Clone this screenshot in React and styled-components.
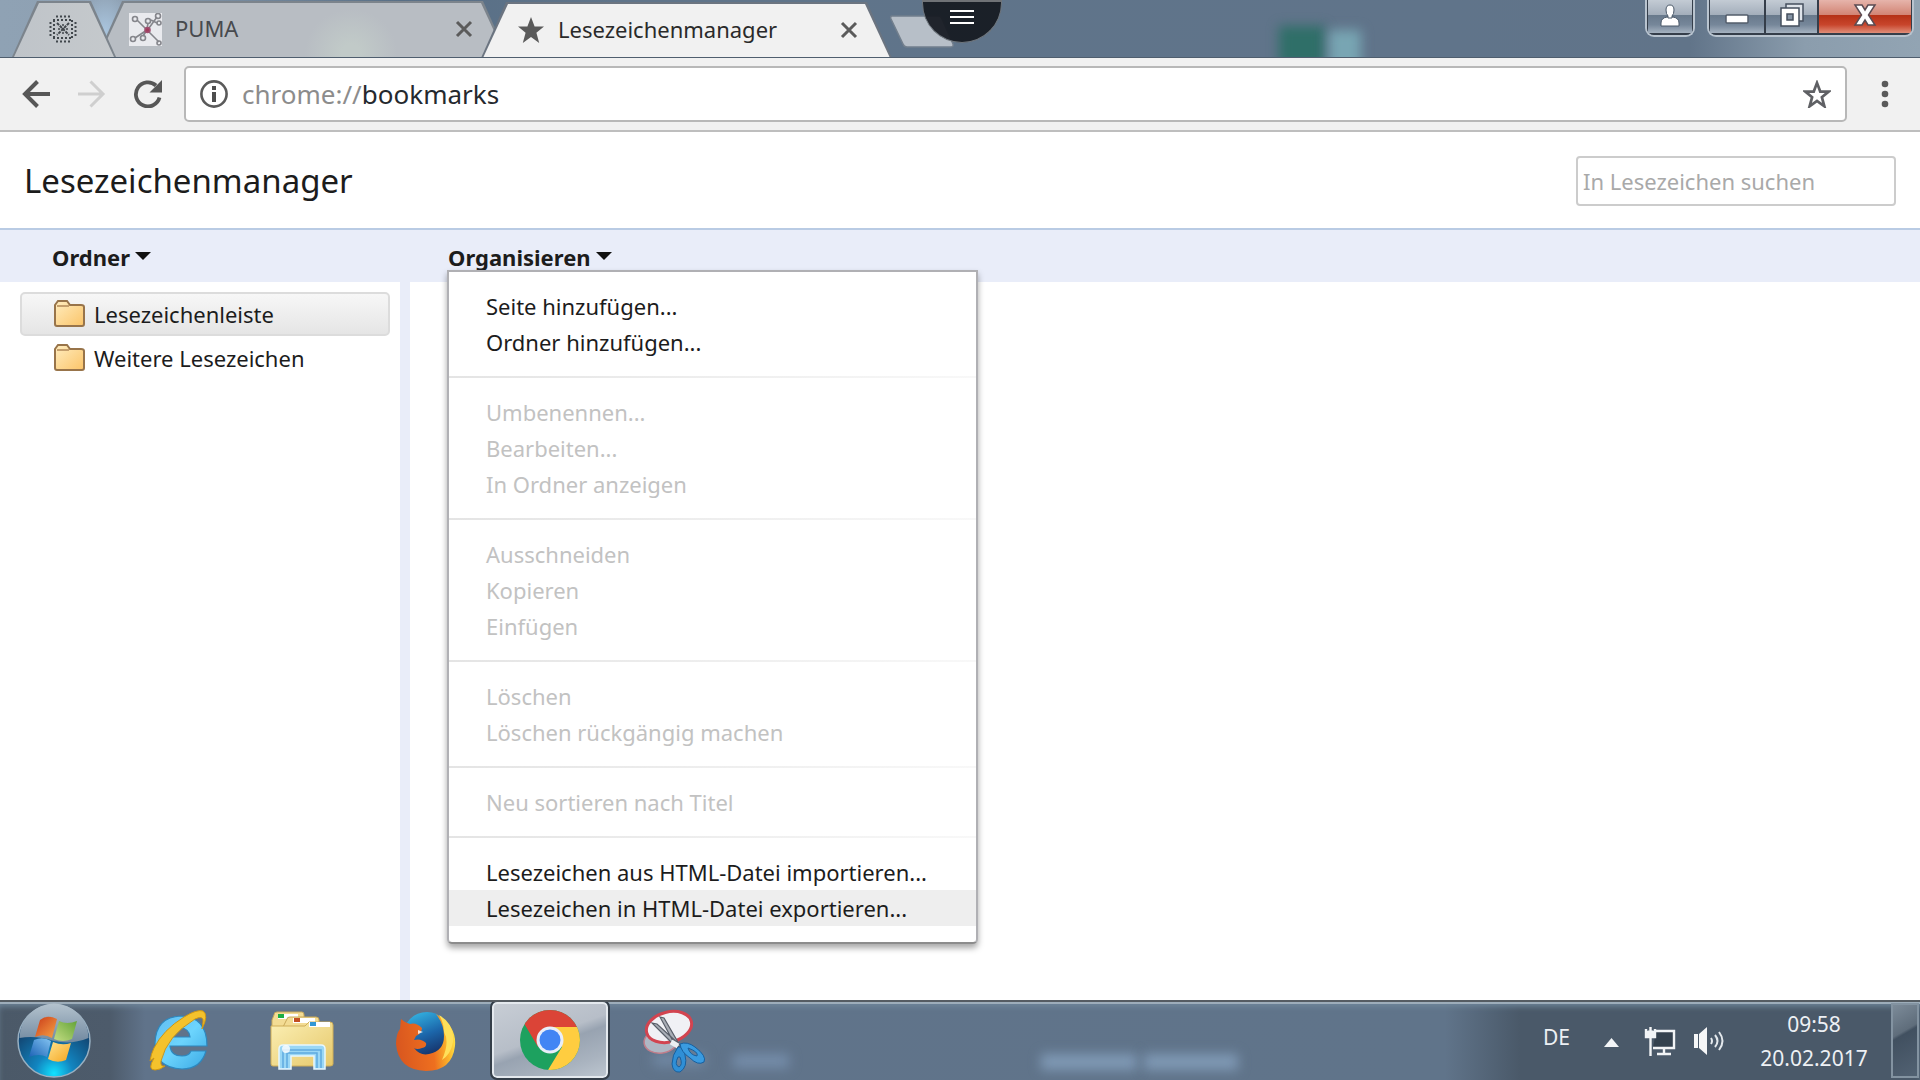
import React from "react";
import styled, { createGlobalStyle, css } from "styled-components";

const GlobalStyle = createGlobalStyle`
  *, *::before, *::after { box-sizing: border-box; }
  body {
    margin: 0;
    background: #fff;
    color: #1c1c1c;
    font-family: "Noto Sans", "Open Sans", sans-serif;
    font-size: 22px;
    line-height: 36px;
  }
  button, input {
    font: inherit;
    color: inherit;
    margin: 0;
    padding: 0;
    border: 0;
    background: none;
  }
  svg { display: block; flex: none; }
`;

const Desktop = styled.div`
  display: flex;
  flex-direction: column;
  min-height: 100vh;
`;

/* ---------- window frame ---------- */

const Frame = styled.header`
  position: relative;
  display: flex;
  align-items: flex-end;
  height: 58px;
  padding-left: 12px;
  overflow: hidden;
  border-bottom: 1px solid #4f5e6e;
  background:
    radial-gradient(ellipse 30px 40px at 105px 30px, #a9c4dd, rgba(169, 196, 221, 0)),
    linear-gradient(90deg, #8fa2b4 0, #8ea0b2 110px, #586f86 400px, #5f748a 620px, #60748a 76%, #617489 88%, #8b9dad 94%, #92a4b3 100%);
`;

const Smudge = styled.span`
  position: absolute;
  left: ${(p) => p.$x};
  top: ${(p) => p.$y};
  width: ${(p) => p.$w};
  height: ${(p) => p.$h};
  background: ${(p) => p.$color};
  filter: blur(6px);
  pointer-events: none;
`;

const tabShape = "polygon(0 100%, 25px 0, calc(100% - 25px) 0, 100% 100%)";

const tabPadding = (p) => {
  if (p.$pinned) return "0 34px 0 32px";
  return p.$active ? "0 29px 0 36px" : "0 30px 0 32px";
};

const Tab = styled.div`
  position: relative;
  z-index: ${(p) => p.$z};
  display: flex;
  align-items: center;
  width: ${(p) => p.$width};
  height: 56px;
  margin-right: ${(p) => p.$overlap};
  margin-bottom: ${(p) => (p.$active ? "-1px" : "0")};
  padding: ${tabPadding};
  justify-content: ${(p) => (p.$pinned ? "center" : "flex-start")};
  color: ${(p) => (p.$active ? "#2a2a2a" : "#474a4e")};
  &::before, &::after {
    content: "";
    position: absolute;
    inset: 0;
    z-index: -1;
    clip-path: ${tabShape};
    background: ${(p) => (p.$active ? "#6b7480" : "#7c848c")};
  }
  &::after {
    inset: 2px 2px 0;
    background: ${(p) => p.$fill};
  }
`;

const TabTitle = styled.span`
  flex: 1;
  margin-left: 13px;
  padding-bottom: 2px;
  line-height: 32px;
  white-space: nowrap;
`;

const IconButton = styled.button`
  display: flex;
  align-items: center;
  justify-content: center;
  width: ${(p) => p.$w || "28px"};
  height: ${(p) => p.$h || "28px"};
  flex: none;
`;

const NewTab = styled.button`
  align-self: flex-start;
  width: 66px;
  height: 33px;
  margin-top: 15px;
`;

const PullHandle = styled.button`
  position: absolute;
  left: 50%;
  top: 0;
  z-index: 6;
  display: flex;
  flex-direction: column;
  align-items: center;
  gap: 4px;
  width: 80px;
  height: 43px;
  padding-top: 8px;
  border: 1px solid #6f767d;
  border-top: 2px solid #6f7276;
  border-radius: 0 0 40px 40px;
  background: rgba(22, 27, 34, 0.94);
  transform: translateX(-38px);
  & > i {
    width: 24px;
    height: 2px;
    background: #fff;
  }
`;

const WindowButtons = styled.div`
  display: flex;
  align-self: flex-start;
  gap: 12px;
  margin-left: auto;
  margin-right: 6px;
`;

const ButtonGroup = styled.div`
  display: flex;
  height: 37px;
  overflow: hidden;
  border: 2px solid #b9c4cf;
  border-top: 0;
  border-radius: 0 0 9px 9px;
`;

const WindowButton = styled.button`
  display: flex;
  align-items: center;
  justify-content: center;
  width: ${(p) => p.$w};
  height: 35px;
  padding-bottom: 4px;
  border: solid #353e4a;
  border-width: 0 1px 2px;
  background: ${(p) =>
    p.$danger
      ? "linear-gradient(#e6b4ab 0, #d28474 45%, #b53116 46%, #c8452c 75%, #e08e79 100%)"
      : "linear-gradient(#c3cbd4 0, #a3aebb 45%, #68798b 46%, #76879a 75%, #a5b2c0 100%)"};
`;

/* ---------- browser toolbar ---------- */

const Toolbar = styled.div`
  display: flex;
  align-items: center;
  height: 74px;
  padding: 0 25px 0 22px;
  gap: 28px;
  border-bottom: 2px solid #bebebe;
  background: #f1f1f1;
`;

const AddressBar = styled.label`
  display: flex;
  align-items: center;
  flex: 1;
  height: 56px;
  margin-left: -6px;
  padding: 0 14px;
  border: 2px solid #b8b8b8;
  border-radius: 5px;
  background: #fff;
  font-size: 26px;
`;

const Scheme = styled.span`
  margin-left: 14px;
  color: #8c8c8c;
`;

const AddressInput = styled.input`
  flex: 1;
  min-width: 0;
  outline: 0;
  color: #25292e;
`;

/* ---------- bookmark manager ---------- */

const PageHeader = styled.div`
  display: flex;
  align-items: center;
  justify-content: space-between;
  height: 98px;
  padding: 2px 24px 0;
  border-bottom: 2px solid #b9cbe4;
`;

const Title = styled.h1`
  margin: 0;
  font-size: 33px;
  font-weight: 400;
  line-height: 44px;
`;

const SearchBox = styled.input`
  width: 320px;
  height: 50px;
  padding: 0 5px;
  border: 2px solid #ccc;
  border-radius: 4px;
  &::placeholder { color: #a9a9a9; opacity: 1; }
`;

const columns = css`
  display: grid;
  grid-template-columns: 410px 1fr;
`;

const Band = styled.div`
  ${columns}
  height: 52px;
  background: #e9edf9;
`;

const BandCell = styled.div`
  position: relative;
  padding-left: ${(p) => p.$indent};
`;

const DropButton = styled.button`
  display: flex;
  align-items: center;
  gap: 5px;
  height: 40px;
  padding-top: 14px;
  font-weight: 700;
  line-height: 24px;
  white-space: nowrap;
  &::after {
    content: "";
    border: solid transparent;
    border-width: 8px 8px 0;
    border-top-color: #111;
    margin-bottom: 3px;
  }
`;

const Menu = styled.div`
  position: absolute;
  left: 37px;
  top: 40px;
  z-index: 5;
  width: 531px;
  border: 2px solid #b0b0b4;
  border-bottom-color: #8c8c8c;
  border-radius: 0 0 5px 5px;
  background: #fff;
  box-shadow: 0 4px 6px rgba(0, 0, 0, 0.35);
`;

const MenuGroup = styled.div`
  padding: 16px 0;
  & + &::before {
    content: "";
    display: block;
    height: 2px;
    margin: -16px 0 16px;
    background: linear-gradient(90deg, #e4e4e4, #f8f8f8);
  }
`;

const MenuItem = styled.button`
  display: block;
  width: 100%;
  height: 36px;
  padding-left: 37px;
  text-align: left;
  line-height: 36px;
  white-space: nowrap;
  background: ${(p) => (p.$hover ? "#eee" : "none")};
  &:disabled { color: #c2c2c2; }
`;

const Body = styled.main`
  ${columns}
  flex: 1;
`;

const Sidebar = styled.nav`
  padding: 10px 10px 10px 20px;
  border-right: 10px solid #e9edf9;
`;

const FolderRow = styled.button`
  display: flex;
  align-items: center;
  gap: 9px;
  width: 100%;
  height: 44px;
  padding-left: 32px;
  border: 2px solid ${(p) => (p.$selected ? "#dcdcdc" : "transparent")};
  border-radius: 5px;
  background: ${(p) => (p.$selected ? "linear-gradient(#f7f7f7, #e5e5e5)" : "none")};
`;

/* ---------- taskbar ---------- */

const Taskbar = styled.footer`
  position: relative;
  display: flex;
  align-items: stretch;
  height: 80px;
  overflow: hidden;
  border-top: 2px solid #555c62;
  color: #edf0f4;
  box-shadow: inset 0 2px 0 #9dadba, inset 0 6px 6px -2px #70889c;
  background: linear-gradient(90deg, #4b5968 0, #4d5b6b 110px, #60738a 145px, #60748a calc(100% - 475px), #4a5969 calc(100% - 400px), #4a5969 100%);
`;

const TaskButton = styled.button`
  position: relative;
  display: flex;
  align-items: center;
  justify-content: center;
  width: ${(p) => p.$w || "124px"};
  flex: none;
  ${(p) =>
    p.$start &&
    css`
      padding-right: 8px;
    `}
  ${(p) =>
    p.$active &&
    css`
      margin: 0 4px 2px;
      border: 2px solid #e4e9ee;
      border-radius: 5px;
      outline: 2px solid #343e49;
      background: linear-gradient(160deg, #c7cdd5 0, #b7bec8 45%, #98a3b1 55%, #a9b3bf 80%, #bcc5cf 100%);
    `}
`;

const Tray = styled.div`
  display: flex;
  align-items: center;
  gap: 17px;
  margin-left: auto;
  font-size: 21px;
`;

const Language = styled.button`
  margin-right: 8px;
  padding-bottom: 8px;
`;

const Clock = styled.time`
  width: 120px;
  margin-left: 12px;
  text-align: center;
  line-height: 34px;
  & > span { display: block; }
`;

const ShowDesktop = styled.button`
  align-self: stretch;
  width: 28px;
  margin: 1px 1px 2px 0;
  border: 2px solid #8393a1;
  background: linear-gradient(150deg, #7c8b99 0, #5f6d7b 38%, #415060 42%, #526273 100%);
`;

/* ---------- drawings ---------- */

const ChipIcon = () => (
  <svg width="28" height="28" viewBox="0 0 28 28" fill="none" stroke="#41474c">
    <path d="M7 1.500h14M4 5h20M4 23h20M7 26.500h14" strokeWidth="2" strokeDasharray="2 2" />
    <path d="M1.500 7v14M5 5v18M23 5v18M26.500 7v14" strokeWidth="2" strokeDasharray="2 2" />
    <path d="M8 8l12 12M20 8L8 20" strokeWidth="2" strokeDasharray="3 1" />
    <path d="M14 9v10M9 14h10" strokeWidth="1.500" strokeDasharray="2 2" />
  </svg>
);

const PumaIcon = () => (
  <svg width="33" height="33" viewBox="0 0 33 33" fill="none" stroke="#85868c" strokeWidth="1.600">
    <rect width="33" height="33" fill="#e9eaee" stroke="none" />
    <path d="M18 17L8 7M18 17L30 29M20 15L28 4M18 17L6 25M18 17l-4 6M19 10l-1 6M28 10l-6-3" />
    <circle cx="6" cy="6" r="2.500" /><circle cx="29" cy="3" r="2.500" /><circle cx="19" cy="8" r="2.500" />
    <circle cx="30" cy="10" r="2" /><circle cx="4" cy="26" r="2.500" /><circle cx="14" cy="25" r="2.500" />
    <circle cx="30" cy="30" r="2" />
    <circle cx="18.500" cy="17" r="2.500" fill="#a33a5c" stroke="#a05070" />
  </svg>
);

const CloseIcon = () => (
  <svg width="18" height="18" viewBox="0 0 18 18" stroke="#5b5b5b" strokeWidth="3">
    <path d="M2 2l14 14M16 2L2 16" />
  </svg>
);

const starPath = "M14 1l3.600 9.600H27l-7.600 6.200 2.800 10.200-8.200-6-8.200 6 2.800-10.200L1 10.600h9.400z";

const StarIcon = ({ filled }) => (
  <svg width="28" height="28" viewBox="0 0 28 28">
    <path
      d={starPath}
      fill={filled ? "#5a5a5a" : "none"}
      stroke={filled ? "none" : "#5f6064"}
      strokeWidth="3"
      transform={filled ? undefined : "translate(1.400 2) scale(.9)"}
    />
  </svg>
);

const Arrow = ({ back }) => (
  <svg width="28" height="28" viewBox="0 0 28 28" fill="none" stroke={back ? "#575757" : "#cfcfcf"} strokeWidth={back ? 4 : 3}>
    {back ? <path d="M28 14H3M15.500 1.500L3 14l12.500 12.500" /> : <path d="M0 14h25M12.500 1.500L25 14 12.500 26.500" />}
  </svg>
);

const ReloadIcon = () => (
  <svg width="30" height="28" viewBox="0 0 30 28">
    <path d="M26.500 17.500A12 12 0 1 1 23 5.500" fill="none" stroke="#575757" strokeWidth="3.800" />
    <path d="M29 0v12.500H16.500z" fill="#575757" />
  </svg>
);

const InfoIcon = () => (
  <svg width="28" height="28" viewBox="0 0 28 28">
    <circle cx="14" cy="14" r="12.600" fill="none" stroke="#5a5a5a" strokeWidth="2.600" />
    <path d="M12 6h4v4h-4zM12 12h4v10h-4z" fill="#4e4e4e" />
  </svg>
);

const DotsIcon = () => (
  <svg width="8" height="28" viewBox="0 0 8 28" fill="#5a5a5a">
    <circle cx="4" cy="4" r="3.300" /><circle cx="4" cy="14" r="3.300" /><circle cx="4" cy="24" r="3.300" />
  </svg>
);

const FolderIcon = () => (
  <svg width="31" height="29" viewBox="0 0 31 29">
    <defs>
      <linearGradient id="folder" x1="0" y1="0" x2="1" y2="1">
        <stop offset="0" stopColor="#ffedc0" /><stop offset="1" stopColor="#fbc468" />
      </linearGradient>
    </defs>
    <path d="M1 24V5l3-4h9l3 4h11q3 0 3 2v17q0 2-2 2H3q-2 0-2-2z" fill="url(#folder)" stroke="#98744a" strokeWidth="2" />
    <path d="M3 6h12" stroke="#c59f6c" strokeWidth="2" />
  </svg>
);

const PersonIcon = () => (
  <svg width="20" height="24" viewBox="0 0 20 24" fill="#fff" stroke="#4a5868" strokeWidth="1">
    <path d="M1 23v-3q0-5 6-6h6q6 1 6 6v3z" /><path d="M10 2q4 0 4 5 0 4-2 6v2H8v-2q-2-2-2-6 0-5 4-5z" />
  </svg>
);

const MinimizeIcon = () => (
  <svg width="24" height="20" viewBox="0 0 24 20"><rect x="1" y="10" width="22" height="8" rx="1" fill="#fff" stroke="#535d6b" strokeWidth="1.500" /></svg>
);

const RestoreIcon = () => (
  <svg width="24" height="24" viewBox="0 0 24 24" stroke="#454f5e" strokeWidth="1.500">
    <path d="M6 1h17v17H6z" fill="#dfe4ea" /><path d="M1 5h18v18H1z" fill="#fff" /><path d="M7 11h6v6H7z" fill="#8594a5" />
  </svg>
);

const CrossIcon = () => (
  <svg width="24" height="22" viewBox="0 0 24 22">
    <path d="M2 1h7l3 5 3-5h7l-6.500 10L22 21h-7l-3-5-3 5H2l6.500-10z" fill="#fff" stroke="#5b4b52" strokeWidth="1.500" />
  </svg>
);

const NewTabShape = () => (
  <svg width="66" height="33" viewBox="0 0 66 33">
    <path d="M3 1h46q3 0 4 3l11 25q1 3-3 3H18q-3 0-4-3L2 4Q1 1 3 1z" fill="#b7bfc8" stroke="#727f8d" strokeWidth="1.500" />
  </svg>
);

const StartOrb = () => (
  <svg width="76" height="76" viewBox="0 0 76 76">
    <defs>
      <radialGradient id="orb" cx=".5" cy=".95" r=".75">
        <stop offset="0" stopColor="#12e2ff" /><stop offset=".35" stopColor="#1285c0" /><stop offset="1" stopColor="#123d68" />
      </radialGradient>
      <linearGradient id="gloss" x1="0" y1="0" x2="0" y2="1">
        <stop offset="0" stopColor="#b4c3ce" /><stop offset="1" stopColor="#7189a0" />
      </linearGradient>
      <linearGradient id="wr" x1="0" y1="0" x2="1" y2="1"><stop offset="0" stopColor="#c93a19" /><stop offset="1" stopColor="#f9a545" /></linearGradient>
      <linearGradient id="wg" x1="1" y1="0" x2="0" y2="1"><stop offset="0" stopColor="#63a338" /><stop offset="1" stopColor="#c4dd83" /></linearGradient>
      <linearGradient id="wb" x1="0" y1="1" x2="1" y2="0"><stop offset="0" stopColor="#1b62b5" /><stop offset="1" stopColor="#83c4f2" /></linearGradient>
      <linearGradient id="wy" x1="0" y1="0" x2="1" y2="1"><stop offset="0" stopColor="#ffe28c" /><stop offset="1" stopColor="#f5a51f" /></linearGradient>
    </defs>
    <circle cx="38" cy="38" r="36" fill="url(#orb)" stroke="#98b0c2" strokeWidth="1.500" />
    <path d="M3.500 35A34.500 34.500 0 0 1 72.500 35Q55 42 38 38 20 32 3.500 35z" fill="url(#gloss)" />
    <path d="M24 17q7-6 17-1l-5 19q-8-5-17-1z" fill="url(#wr)" />
    <path d="M43 18q8 4 18 0l-5 18q-9 4-18 0z" fill="url(#wg)" />
    <path d="M18 37q9-4 17 1l-4 16q-8-4-18 0z" fill="url(#wb)" />
    <path d="M37 39q9 4 18 1l-5 17q-9 4-18-1z" fill="url(#wy)" />
  </svg>
);

const ExplorerE = () => (
  <svg width="62" height="62" viewBox="0 0 62 62">
    <defs>
      <linearGradient id="ie" x1="0" y1="0" x2="1" y2="1">
        <stop offset="0" stopColor="#62bdf0" /><stop offset=".5" stopColor="#6cd4fd" /><stop offset="1" stopColor="#3aa9e4" />
      </linearGradient>
    </defs>
    <path d="M60 36H23q1 10 12 10 7 0 9-5h15q-5 18-24 18Q8 58 8 33 9 7 34 6q26 1 26 30zM23 27h20q-1-9-10-9t-10 9z" fill="url(#ie)" stroke="#2e87bd" strokeWidth="1.200" />
    <path d="M7 48Q0 60 8 60q5 0 10-4-5 1-4-5Q20 26 48 9q9-4 8 3l-1 7q7-14 1-18-6-2-19 6Q16 20 7 38q-3 6-4 13z" fill="#f4c22c" stroke="#cf9714" strokeWidth="1" />
  </svg>
);

const FilesIcon = () => (
  <svg width="64" height="60" viewBox="0 0 64 60">
    <defs>
      <linearGradient id="files" x1="0" y1="0" x2="1" y2="1"><stop offset="0" stopColor="#fbefb4" /><stop offset="1" stopColor="#e6c86a" /></linearGradient>
    </defs>
    <path d="M4 4q0-3 3-3h25q2 0 2 3v12H2V9z" fill="#f3dc94" stroke="#c9a95a" />
    <rect x="8" y="3" width="20" height="5" fill="#fff" /><rect x="8" y="3" width="6" height="4" fill="#1fae43" />
    <path d="M17 8q0-2 3-2h26q3 0 3 3v9H12z" fill="#f3dc94" stroke="#c9a95a" />
    <rect x="23" y="7" width="22" height="5" fill="#fff" /><rect x="24" y="7" width="6" height="4" fill="#c34e22" />
    <path d="M1 15h34l4-4h21q3 0 3 3v39q0 2-3 2H3q-2 0-2-2z" fill="url(#files)" stroke="#cfae59" />
    <rect x="39" y="11" width="21" height="5" fill="#fff" /><rect x="40" y="11" width="6" height="4" fill="#3197d5" />
    <path d="M9 58V38q0-4 4-4h38q4 0 4 4v20H44V45H21v13z" fill="#9ad7f5" stroke="#e6f7ff" strokeWidth="1.500" />
    <path d="M13 57V39h38v18M17 57V42h30v15" fill="none" stroke="#5fabdf" strokeWidth="1.500" />
    <circle cx="16" cy="38" r="4" fill="#fff" opacity=".8" />
  </svg>
);

const FirefoxIcon = () => (
  <svg width="62" height="62" viewBox="0 0 62 62">
    <defs>
      <linearGradient id="globe" x1=".2" y1="0" x2=".6" y2="1"><stop offset="0" stopColor="#34b6e4" /><stop offset=".5" stopColor="#1c66aa" /><stop offset="1" stopColor="#14275c" /></linearGradient>
      <linearGradient id="fox" x1="0" y1=".4" x2="1" y2=".3"><stop offset="0" stopColor="#d9571f" /><stop offset=".6" stopColor="#ee6f1f" /><stop offset=".85" stopColor="#fbb62b" /><stop offset="1" stopColor="#ffe648" /></linearGradient>
    </defs>
    <circle cx="32" cy="26" r="24" fill="url(#globe)" />
    <path d="M6 9q4 4 9 5 6-2 12 4 0 5-6 8l-2 4q7-2 12 3 1 4-4 5-5 2-8 0 6 8 15 6 15-3 15-18 0-12-8-22 21 12 19 32Q57 61 31 61 3 60 1 34q0-10 4-15z" fill="url(#fox)" />
    <path d="M44 5q16 9 14 27-2 12-11 18 8-18 2-28 0-9-5-17z" fill="#ffe05a" />
    <path d="M23 20l5 2-5 2z" fill="#fff" opacity=".8" />
  </svg>
);

const ChromeIcon = () => (
  <svg width="60" height="60" viewBox="0 0 60 60">
    <defs><clipPath id="disc"><circle cx="30" cy="30" r="30" /></clipPath></defs>
    <g clipPath="url(#disc)">
      <rect width="60" height="60" fill="#1da15f" />
      <path d="M0 0h60v17H30L18 37 5 15z" fill="#db4437" />
      <path d="M30 17h30v43H28L42 37z" fill="#ffcd40" />
    </g>
    <circle cx="30" cy="30" r="13.500" fill="#e9eef8" />
    <circle cx="30" cy="30" r="10.500" fill="#4285f4" />
  </svg>
);

const SnippingIcon = () => (
  <svg width="64" height="64" viewBox="0 0 64 64">
    <ellipse cx="19" cy="32" rx="17" ry="12" transform="rotate(-8 19 32)" fill="#aeb7c4" stroke="#c07d8a" strokeWidth="1.500" />
    <ellipse cx="27" cy="18" rx="23" ry="15" transform="rotate(-14 27 18)" fill="#f0f1f5" stroke="#d24450" strokeWidth="3" />
    <path d="M18 8l4 1 15 26-5-1zM10 14l5 1 24 22-5 1z" fill="#a9aeb6" stroke="#595f69" strokeWidth="1.200" />
    <path d="M29 33l7 4" stroke="#eceff2" strokeWidth="5" />
    <path d="M36 38q5-1 7 8 3 12-5 17-7 1-8-8 0-9 6-17zm0 10q-4 8 1 10 4-2 1-10z" fill="#2f8fd6" stroke="#17609f" fillRule="evenodd" />
    <path d="M38 35q7-3 15 3 12 9 9 15-6 4-14-4-9-6-10-14zm8 4q2 7 9 8 2-4-9-8z" fill="#3a9be0" stroke="#17609f" fillRule="evenodd" />
  </svg>
);

const NetworkIcon = () => (
  <svg width="32" height="32" viewBox="0 0 32 32" fill="none" stroke="#f2f4f6" strokeWidth="2.400">
    <path d="M12 6h18v17H9" fill="#34414e" /><path d="M20 23v5M13 29h14" />
    <path d="M2 4v8h9V4M6.500 2v9" /><path d="M3.500 6h6v5h-6z" fill="#f2f4f6" strokeWidth="1" /><path d="M6.500 12v19" />
  </svg>
);

const SpeakerIcon = () => (
  <svg width="32" height="30" viewBox="0 0 32 30">
    <path d="M1 8h4v14H1zM6 8l8-7v28l-8-7z" fill="#f6f7f8" />
    <path d="M18 12q2 3 0 6M22 9q5 6 0 12M26 6q7 9 0 18" fill="none" stroke="#e3e8ec" strokeWidth="2" />
  </svg>
);

const TrayArrow = () => (
  <svg width="15" height="14" viewBox="0 0 15 14"><path d="M7.500 4L15 13H0z" fill="#f3f5f7" /></svg>
);

/* ---------- data ---------- */

const menuGroups = [
  [{ label: "Seite hinzufügen..." }, { label: "Ordner hinzufügen..." }],
  [
    { label: "Umbenennen...", disabled: true },
    { label: "Bearbeiten...", disabled: true },
    { label: "In Ordner anzeigen", disabled: true },
  ],
  [
    { label: "Ausschneiden", disabled: true },
    { label: "Kopieren", disabled: true },
    { label: "Einfügen", disabled: true },
  ],
  [
    { label: "Löschen", disabled: true },
    { label: "Löschen rückgängig machen", disabled: true },
  ],
  [{ label: "Neu sortieren nach Titel", disabled: true }],
  [
    { label: "Lesezeichen aus HTML-Datei importieren..." },
    { label: "Lesezeichen in HTML-Datei exportieren...", hover: true },
  ],
];

const folders = [
  { name: "Lesezeichenleiste", selected: true },
  { name: "Weitere Lesezeichen" },
];

export default function App() {
  return (
    <Desktop>
      <GlobalStyle />
      <Frame>
        <Tab $width="104px" $overlap="-19px" $z={2} $pinned $fill="linear-gradient(90deg, #bfc4c9, #c5c9cc)">
          <ChipIcon />
        </Tab>
        <Tab $width="411px" $overlap="-27px" $z={1} $fill="radial-gradient(ellipse 46px 44px at 252px 50px, #c1cac8 20%, #b8bdc3 100%)">
          <PumaIcon />
          <TabTitle>PUMA</TabTitle>
          <IconButton aria-label="PUMA schließen"><CloseIcon /></IconButton>
        </Tab>
        <Tab $width="411px" $overlap="-3px" $z={3} $active $fill="#f1f1f1">
          <StarIcon filled />
          <TabTitle>Lesezeichenmanager</TabTitle>
          <IconButton aria-label="Lesezeichenmanager schließen"><CloseIcon /></IconButton>
        </Tab>
        <NewTab aria-label="Neuer Tab"><NewTabShape /></NewTab>
        <Smudge $x="66.6%" $y="26px" $w="46px" $h="40px" $color="#2f6f68" />
        <Smudge $x="69.2%" $y="30px" $w="32px" $h="40px" $color="#78a5b3" />
        <PullHandle aria-label="Menü"><i /><i /><i /></PullHandle>
        <WindowButtons>
          <ButtonGroup>
            <WindowButton $w="46px" aria-label="Profil"><PersonIcon /></WindowButton>
          </ButtonGroup>
          <ButtonGroup>
            <WindowButton $w="56px" aria-label="Minimieren"><MinimizeIcon /></WindowButton>
            <WindowButton $w="53px" aria-label="Wiederherstellen"><RestoreIcon /></WindowButton>
            <WindowButton $w="94px" $danger aria-label="Schließen"><CrossIcon /></WindowButton>
          </ButtonGroup>
        </WindowButtons>
      </Frame>

      <Toolbar>
        <IconButton aria-label="Zurück"><Arrow back /></IconButton>
        <IconButton aria-label="Vorwärts"><Arrow /></IconButton>
        <IconButton aria-label="Neu laden"><ReloadIcon /></IconButton>
        <AddressBar>
          <InfoIcon />
          <Scheme>chrome://</Scheme>
          <AddressInput aria-label="Adresse" defaultValue="bookmarks" />
          <IconButton aria-label="Lesezeichen setzen"><StarIcon /></IconButton>
        </AddressBar>
        <IconButton $w="20px" aria-label="Einstellungen"><DotsIcon /></IconButton>
      </Toolbar>

      <PageHeader>
        <Title>Lesezeichenmanager</Title>
        <SearchBox type="search" aria-label="In Lesezeichen suchen" placeholder="In Lesezeichen suchen" />
      </PageHeader>

      <Band>
        <BandCell $indent="52px"><DropButton>Ordner</DropButton></BandCell>
        <BandCell $indent="38px">
          <DropButton aria-expanded="true">Organisieren</DropButton>
          <Menu role="menu">
            {menuGroups.map((group, i) => (
              <MenuGroup key={i} role="group">
                {group.map((item) => (
                  <MenuItem key={item.label} role="menuitem" disabled={item.disabled} $hover={item.hover}>
                    {item.label}
                  </MenuItem>
                ))}
              </MenuGroup>
            ))}
          </Menu>
        </BandCell>
      </Band>

      <Body>
        <Sidebar>
          {folders.map((f) => (
            <FolderRow key={f.name} $selected={f.selected}>
              <FolderIcon />
              {f.name}
            </FolderRow>
          ))}
        </Sidebar>
      </Body>

      <Taskbar>
        <Smudge $x="34%" $y="52px" $w="52px" $h="12px" $color="#7189a4" />
        <Smudge $x="38.2%" $y="52px" $w="56px" $h="14px" $color="#758daa" />
        <Smudge $x="54.2%" $y="52px" $w="96px" $h="16px" $color="#7f99b5" />
        <Smudge $x="59.6%" $y="52px" $w="94px" $h="16px" $color="#7f99b5" />
        <TaskButton $w="116px" $start aria-label="Start"><StartOrb /></TaskButton>
        <TaskButton aria-label="Internet Explorer"><ExplorerE /></TaskButton>
        <TaskButton aria-label="Windows-Explorer"><FilesIcon /></TaskButton>
        <TaskButton aria-label="Firefox"><FirefoxIcon /></TaskButton>
        <TaskButton $w="116px" $active aria-label="Chrome"><ChromeIcon /></TaskButton>
        <TaskButton aria-label="Snipping Tool"><SnippingIcon /></TaskButton>
        <Tray>
          <Language>DE</Language>
          <IconButton $w="32px" aria-label="Ausgeblendete Symbole"><TrayArrow /></IconButton>
          <NetworkIcon />
          <SpeakerIcon />
          <Clock><span>09:58</span><span>20.02.2017</span></Clock>
          <ShowDesktop aria-label="Desktop anzeigen" />
        </Tray>
      </Taskbar>
    </Desktop>
  );
}
